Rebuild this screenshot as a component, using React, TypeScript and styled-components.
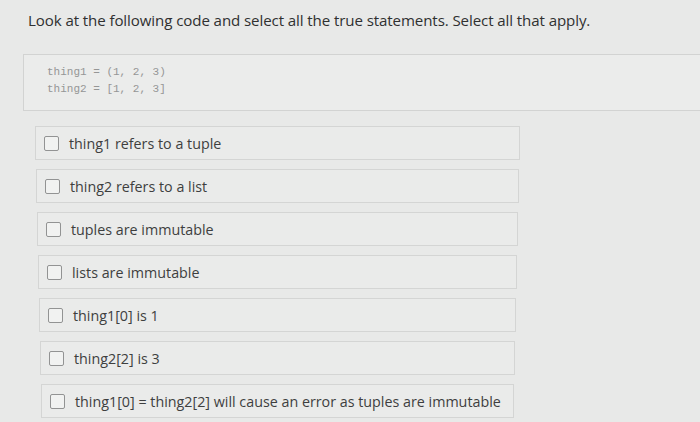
import React from 'react';
import styled, { createGlobalStyle } from 'styled-components';

const GlobalStyle = createGlobalStyle`
  html, body {
    margin: 0;
    padding: 0;
    background: #e8e9e8;
    overflow: hidden;
  }
`;

const Page = styled.div`
  width: 700px;
  height: 422px;
  overflow: hidden;
  font-family: 'Open Sans', 'Noto Sans', sans-serif;
  color: #3a3b3b;
`;

const Question = styled.div`
  margin: 9px 0 0 28px;
  font-size: 15.1px;
  line-height: 22px;
  color: #2f3030;
  letter-spacing: -0.1px;
`;

const CodeBox = styled.pre`
  margin: 23px 0 0 23px;
  width: 700px;
  height: 57px;
  box-sizing: border-box;
  padding: 9px 0 0 23px;
  background: #ebeceb;
  border: 1px solid #d2d3d2;
  border-right: none;
  font-family: 'Liberation Mono', 'DejaVu Sans Mono', monospace;
  font-size: 11px;
  line-height: 17px;
  color: #959696;
`;

const Options = styled.div`
  display: flex;
  flex-direction: column;
  gap: 9px;
  margin-top: 15px;
`;

const OptionRow = styled.label<{ $shift: number }>`
  display: flex;
  align-items: center;
  gap: 10px;
  height: 34px;
  box-sizing: border-box;
  margin-left: ${({ $shift }) => 35 + $shift}px;
  width: ${({ $shift }) => 485 - 2 * $shift}px;
  padding-left: 8px;
  background: #eaebea;
  border: 1px solid #d4d5d4;
  font-size: 14.3px;
  color: #3e3f3f;
`;

const Box = styled.span`
  width: 13px;
  height: 13px;
  flex: 0 0 auto;
  border: 1px solid #929393;
  border-radius: 2px;
  background: #f1f2f1;
`;

const options = [
  'thing1 refers to a tuple',
  'thing2 refers to a list',
  'tuples are immutable',
  'lists are immutable',
  'thing1[0] is 1',
  'thing2[2] is 3',
  'thing1[0] = thing2[2] will cause an error as tuples are immutable',
];

export default function App() {
  return (
    <Page>
      <GlobalStyle />
      <Question>
        Look at the following code and select all the true statements. Select all that apply.
      </Question>
      <CodeBox>{'thing1 = (1, 2, 3)\nthing2 = [1, 2, 3]'}</CodeBox>
      <Options>
        {options.map((text, i) => (
          <OptionRow key={text} $shift={i}>
            <Box />
            <span>{text}</span>
          </OptionRow>
        ))}
      </Options>
    </Page>
  );
}
